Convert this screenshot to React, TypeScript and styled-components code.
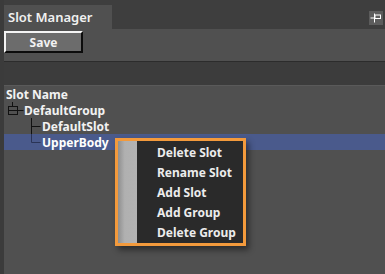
import React from 'react';
import styled, { createGlobalStyle } from 'styled-components';

const GlobalStyle = createGlobalStyle`
  html, body {
    margin: 0;
    padding: 0;
    background: #3b3b3b;
    overflow: hidden;
  }
  body {
    font-family: "Noto Sans", "DejaVu Sans", sans-serif;
    font-size: 12px;
    color: #f2f2f2;
  }
`;

const Window = styled.div`
  position: relative;
  width: 385px;
  height: 274px;
  display: flex;
  flex-direction: column;
  padding-left: 4px;
  box-sizing: border-box;
  background: #3b3b3b;
`;

const TabBar = styled.div`
  height: 29px;
  padding-top: 5px;
  box-sizing: border-box;
  display: flex;
  align-items: stretch;
  justify-content: space-between;
  background: #3e3e3e;
`;

const Tab = styled.div`
  width: 108px;
  background: #505050;
  display: flex;
  align-items: center;
  padding-left: 4px;
  box-sizing: border-box;
  font-size: 13px;
  font-weight: 600;
  color: #f0f0f0;
`;

const PinButton = styled.div`
  width: 14px;
  height: 14px;
  margin: 6px 2px 0 0;
  background: #5c5c5c;
  display: flex;
  align-items: center;
  justify-content: center;
`;

const Toolbar = styled.div`
  height: 33px;
  background: #505050;
  padding-top: 2px;
  box-sizing: border-box;
  border-bottom: 1px solid #2c2c2c;
`;

const SaveButton = styled.button`
  width: 79px;
  height: 22px;
  box-sizing: border-box;
  background: #6c6c6c;
  border-style: solid;
  border-width: 2px;
  border-color: #f4f4f4 #0c0c0c #0c0c0c #f4f4f4;
  font-family: inherit;
  font-size: 12px;
  font-weight: 700;
  color: #f2f2f2;
  padding: 0;
  display: flex;
  align-items: center;
  justify-content: center;
`;

const SearchBand = styled.div`
  height: 23px;
  background: #3c3c3c;
  border-bottom: 1px solid #5a5a5a;
`;

const TreePanel = styled.div`
  flex: 1;
  background: #505050;
  padding-top: 2px;
`;

const Header = styled.div`
  height: 14px;
  padding-left: 2px;
  font-weight: 700;
  line-height: 14px;
`;

const Row = styled.div<{ $indent: number; $selected?: boolean }>`
  position: relative;
  height: 16px;
  display: flex;
  align-items: center;
  padding-left: ${p => p.$indent}px;
  font-weight: 700;
  background: ${p => (p.$selected ? '#4a5a8c' : 'transparent')};
  color: ${p => (p.$selected ? '#ffffff' : '#f2f2f2')};
`;

const Guide = styled.svg`
  flex: none;
`;

const Menu = styled.div`
  position: absolute;
  left: 115px;
  top: 138px;
  width: 131px;
  height: 108px;
  box-sizing: border-box;
  border: 3px solid #f39a3c;
  background: #2a2a2a;
  display: flex;
  box-shadow: 3px 4px 6px rgba(0, 0, 0, 0.45);
`;

const MenuGutter = styled.div`
  width: 19px;
  background: linear-gradient(to right, #8f8f8f, #b0b0b0 35%, #b3b3b3);
`;

const MenuList = styled.div`
  flex: 1;
  padding: 2px 0 0 20px;
  display: flex;
  flex-direction: column;
`;

const MenuItem = styled.div`
  height: 20px;
  line-height: 20px;
  font-weight: 700;
  color: #ececec;
`;

export default function App() {
  return (
    <>
      <GlobalStyle />
      <Window>
        <TabBar>
          <Tab>Slot Manager</Tab>
          <PinButton>
            <svg width="12" height="12" viewBox="0 0 12 12">
              <path d="M0.5 6h4M4.5 1.5v9" stroke="#fff" strokeWidth="1" fill="none" />
              <rect x="5" y="3" width="5.5" height="3.5" fill="none" stroke="#fff" strokeWidth="1" />
            </svg>
          </PinButton>
        </TabBar>
        <Toolbar>
          <SaveButton>Save</SaveButton>
        </Toolbar>
        <SearchBand />
        <TreePanel>
          <Header>Slot Name</Header>
          <Row $indent={3}>
            <Guide width="17" height="16" viewBox="0 0 17 16">
              <path d="M5.5 0v4M10.5 8.5h6" stroke="#111" strokeWidth="1" fill="none" />
              <rect x="1.5" y="4.5" width="9" height="8" fill="none" stroke="#111" strokeWidth="1" />
              <path d="M1.5 8.5h9" stroke="#111" strokeWidth="1" />
            </Guide>
            DefaultGroup
          </Row>
          <Row $indent={27}>
            <Guide width="11" height="16" viewBox="0 0 11 16">
              <path d="M0.5 0v16M0.5 8.5h9" stroke="#111" strokeWidth="1" fill="none" />
            </Guide>
            DefaultSlot
          </Row>
          <Row $indent={27} $selected>
            <Guide width="11" height="16" viewBox="0 0 11 16">
              <path d="M0.5 0v8.5h9" stroke="#2a3456" strokeWidth="1" fill="none" />
            </Guide>
            UpperBody
          </Row>
        </TreePanel>
        <Menu>
          <MenuGutter />
          <MenuList>
            <MenuItem>Delete Slot</MenuItem>
            <MenuItem>Rename Slot</MenuItem>
            <MenuItem>Add Slot</MenuItem>
            <MenuItem>Add Group</MenuItem>
            <MenuItem>Delete Group</MenuItem>
          </MenuList>
        </Menu>
      </Window>
    </>
  );
}
